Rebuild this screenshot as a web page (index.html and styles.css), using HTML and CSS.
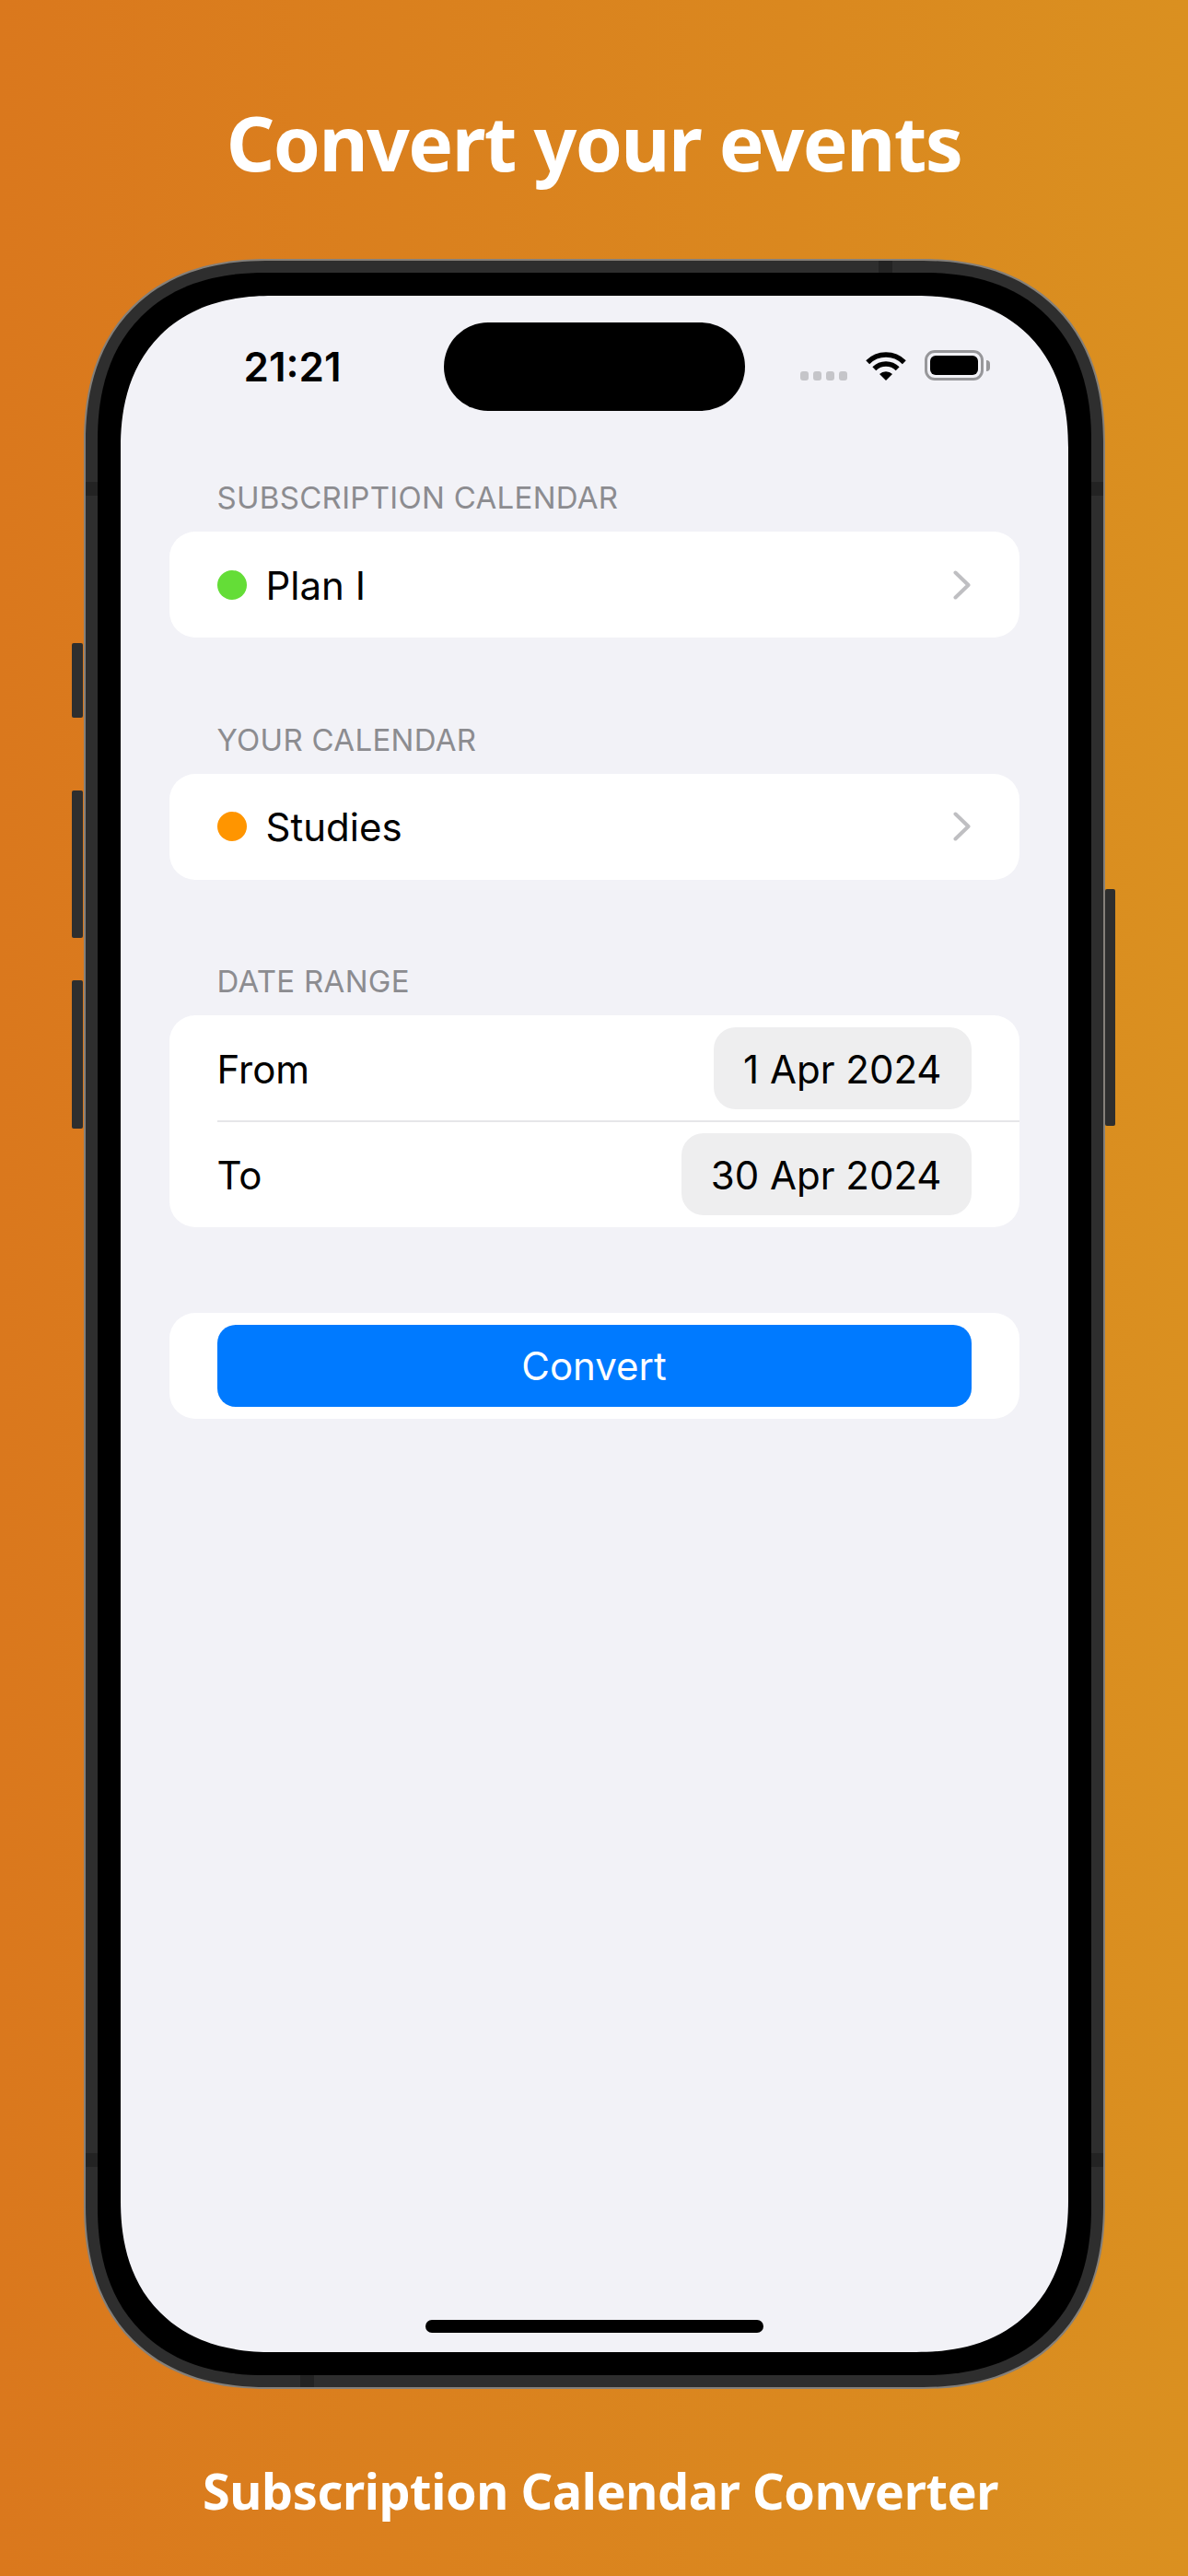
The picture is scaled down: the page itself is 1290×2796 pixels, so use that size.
FILE: index.html
```html
<!DOCTYPE html>
<html lang="en">

<head>
  <meta charset="UTF-8">
  <meta name="viewport" content="width=device-width, initial-scale=1.0">
  <title>Subscription Calendar Converter</title>
  <link rel="stylesheet" href="styles.css">
</head>

<body>
  <h1 class="title">Convert your events</h1>

  <div class="phone">
    <span class="side-btn btn-mute"></span>
    <span class="side-btn btn-up"></span>
    <span class="side-btn btn-down"></span>
    <span class="side-btn btn-power"></span>
    <span class="band band-top"></span>
    <span class="band band-bottom"></span>
    <span class="band band-left1"></span>
    <span class="band band-left2"></span>
    <span class="band band-right1"></span>
    <span class="band band-right2"></span>

    <div class="bezel">
      <div class="screen">
        <div class="status">
          <div class="time">21:21</div>
          <div class="island"></div>
          <div class="status-icons">
            <div class="signal"><i></i><i></i><i></i><i></i></div>
            <svg class="wifi" width="44" height="32" viewBox="0 0 44 32">
              <path d="M2.2 12.2A28 28 0 0 1 41.8 12.2" fill="none" stroke="#000" stroke-width="5.5" />
              <path d="M9.3 19.3A18 18 0 0 1 34.7 19.3" fill="none" stroke="#000" stroke-width="5.5" />
              <path d="M22 32L15 25A10 10 0 0 1 29 25Z" fill="#000" />
            </svg>
            <div class="battery"><div class="battery-level"></div></div>
            <div class="battery-cap"></div>
          </div>
        </div>

        <div class="list">
          <section class="group">
            <div class="group-label">SUBSCRIPTION CALENDAR</div>
            <div class="card">
              <div class="row">
                <span class="dot dot-green"></span>
                <span class="row-text">Plan I</span>
                <svg class="chevron" width="20" height="32" viewBox="0 0 20 32">
                  <path d="M2.5 2.5L16.5 16L2.5 29.5" fill="none" stroke="#bfbfc2" stroke-width="4" stroke-linecap="round" stroke-linejoin="round" />
                </svg>
              </div>
            </div>
          </section>

          <section class="group">
            <div class="group-label">YOUR CALENDAR</div>
            <div class="card">
              <div class="row">
                <span class="dot dot-orange"></span>
                <span class="row-text">Studies</span>
                <svg class="chevron" width="20" height="32" viewBox="0 0 20 32">
                  <path d="M2.5 2.5L16.5 16L2.5 29.5" fill="none" stroke="#bfbfc2" stroke-width="4" stroke-linecap="round" stroke-linejoin="round" />
                </svg>
              </div>
            </div>
          </section>

          <section class="group">
            <div class="group-label">DATE RANGE</div>
            <div class="card">
              <div class="row">
                <span class="row-text">From</span>
                <span class="date-pill">1 Apr 2024</span>
              </div>
              <div class="divider"></div>
              <div class="row">
                <span class="row-text">To</span>
                <span class="date-pill">30 Apr 2024</span>
              </div>
            </div>
          </section>

          <section class="group group-action">
            <div class="card">
              <div class="row">
                <div class="convert-btn">Convert</div>
              </div>
            </div>
          </section>
        </div>

        <div class="home-bar"></div>
      </div>
    </div>
  </div>

  <div class="footer">Subscription Calendar Converter</div>
</body>

</html>
```

FILE: styles.css
```css
* {
  box-sizing: border-box;
}

body {
  margin: 0;
  width: 1290px;
  height: 2796px;
  overflow: hidden;
  display: flex;
  flex-direction: column;
  align-items: center;
  background: linear-gradient(90deg, #da781d, #da9020);
  font-family: Inter, "Liberation Sans", sans-serif;
  color: #000;
}

.title {
  margin: 0;
  height: 281px;
  padding-top: 99px;
  font-family: "Noto Sans", sans-serif;
  font-size: 82px;
  line-height: 110px;
  font-weight: 700;
  letter-spacing: -1.6px;
  color: #fff;
}

.footer {
  margin: 73px 0 0 14px;
  font-family: "Noto Sans", sans-serif;
  font-size: 54px;
  line-height: 74px;
  font-weight: 700;
  letter-spacing: -0.4px;
  color: #fff;
}

/* phone frame */
.phone {
  position: relative;
  flex: none;
  width: 1109px;
  height: 2312px;
  padding: 13px;
  background: #2e2e2e;
  border: 2px solid #85807a;
  border-radius: 200px;
  corner-shape: superellipse(1.2);
}

.bezel {
  height: 100%;
  padding: 25px;
  background: #000;
  border-radius: 182px;
  corner-shape: superellipse(1.2);
}

.side-btn {
  position: absolute;
  width: 12px;
  background: #2e2e2e;
  border-radius: 2px;
}

.btn-mute {
  left: -15px;
  top: 415px;
  height: 81px;
}

.btn-up {
  left: -15px;
  top: 575px;
  height: 160px;
}

.btn-down {
  left: -15px;
  top: 781px;
  height: 161px;
}

.btn-power {
  right: -13px;
  top: 682px;
  height: 257px;
  width: 11px;
}

.band {
  position: absolute;
  background: #232323;
}

.band-top {
  left: 861px;
  top: 0;
  width: 15px;
  height: 13px;
}

.band-bottom {
  left: 233px;
  bottom: 0;
  width: 15px;
  height: 13px;
}

.band-left1,
.band-left2,
.band-right1,
.band-right2 {
  width: 13px;
  height: 15px;
}

.band-left1 {
  left: 0;
  top: 240px;
}

.band-left2 {
  left: 0;
  top: 2054px;
}

.band-right1 {
  right: 0;
  top: 240px;
}

.band-right2 {
  right: 0;
  top: 2054px;
}

.screen {
  height: 100%;
  display: flex;
  flex-direction: column;
  background: #f2f2f7;
  border-radius: 165px;
  corner-shape: superellipse(1.2);
  overflow: hidden;
}

/* status bar */
.status {
  flex: none;
  display: grid;
  grid-template-columns: 351px 327px 1fr;
  padding-top: 29px;
}

.time {
  padding: 23px 0 0 134px;
  font-size: 44px;
  line-height: 50px;
  font-weight: 600;
}

.island {
  height: 96px;
  background: #000;
  border-radius: 48px;
}

.status-icons {
  display: flex;
  align-items: flex-end;
  height: 63px;
  padding-left: 60px;
}

.signal {
  display: flex;
  gap: 5px;
  margin-right: 20px;
}

.signal i {
  width: 9px;
  height: 10px;
  background: #c5c5c9;
  border-radius: 3px;
}

.wifi {
  margin-right: 20px;
}

.battery {
  width: 64px;
  height: 33px;
  padding: 3px;
  border: 3px solid #97979a;
  border-radius: 11px;
}

.battery-level {
  height: 100%;
  background: #000;
  border-radius: 6px;
}

.battery-cap {
  width: 4px;
  height: 12px;
  margin: 0 0 10px 3px;
  background: #97979a;
  border-radius: 0 4px 4px 0;
}

/* grouped list */
.list {
  padding: 74px 53px 0;
}

.group {
  margin-bottom: 90.5px;
}

.group-action {
  margin-top: 93px;
}

.group-label {
  height: 40px;
  margin-bottom: 17px;
  padding-left: 52px;
  font-size: 33px;
  line-height: 40px;
  letter-spacing: 0.3px;
  color: #8c8c90;
}

.card {
  background: #fff;
  border-radius: 28px;
}

.row {
  height: 115px;
  display: flex;
  align-items: center;
  padding: 0 52px;
}

.dot {
  flex: none;
  width: 32px;
  height: 32px;
  margin-right: 21px;
  border-radius: 50%;
}

.dot-green {
  background: #64dd37;
}

.dot-orange {
  background: #ff9500;
}

.row-text {
  flex: 1;
  padding-top: 2px;
  font-size: 42px;
  line-height: 50px;
}

.date-pill {
  height: 89px;
  padding: 0 32px;
  background: #eeeeef;
  border-radius: 24px;
  font-size: 42px;
  line-height: 91px;
}

.divider {
  position: relative;
  height: 2px;
  margin: -1px 0 -1px 52px;
  background: #e6e6e9;
}

.convert-btn {
  flex: 1;
  height: 89px;
  background: #007aff;
  border-radius: 20px;
  color: #fff;
  font-size: 42px;
  line-height: 89px;
  text-align: center;
}

.home-bar {
  flex: none;
  width: 367px;
  height: 14px;
  margin: auto auto 21px;
  background: #000;
  border-radius: 7px;
}
```
